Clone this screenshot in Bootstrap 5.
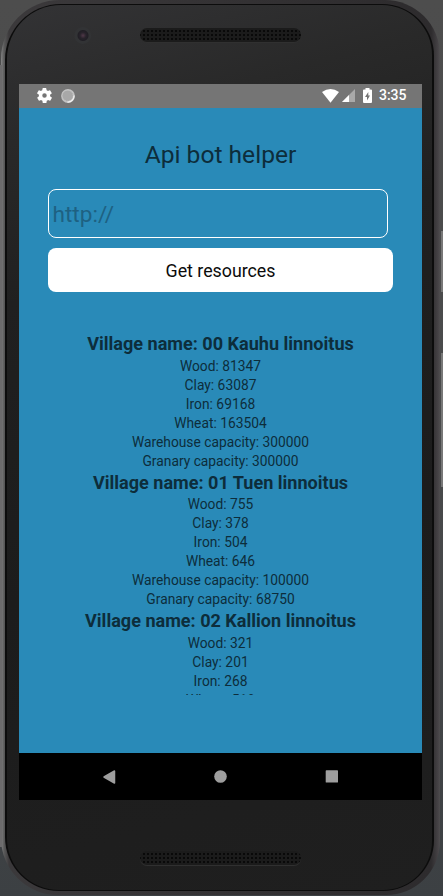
<!DOCTYPE html>
<html lang="en">
<head>
<meta charset="utf-8">
<meta name="viewport" content="width=device-width, initial-scale=1">
<title>Api bot helper</title>
<link href="https://cdn.jsdelivr.net/npm/bootstrap@5.3.0/dist/css/bootstrap.min.css" rel="stylesheet">
<style>
body{width:443px;height:896px;font-family:Roboto,sans-serif;background:linear-gradient(#4d4d4d,#494a4b 50%,#3c4043)}
.stage{width:443px;height:896px;padding:0 3px 1px 1px}
.side-key{right:0;width:2px;background:#777}
.edge{left:0;top:65px;width:2px;height:782px;background:#6c6b6c}
.shell{border-radius:59px 55px 54px 57px;padding:4px 6px 4px 4px;background:linear-gradient(90deg,#858585 0,#5a5a5a 3px,#3b393b 8px,#2d2b2d 430px,#454245 437px,#4f4d4f 100%)}
.rim{border-radius:56px 52px 51px 54px;padding:1px 2px;background:#0c0c0c}
.glass{border-radius:54px 50px 49px 52px;padding:79px 10px 0 12px;background:linear-gradient(165deg,#333335,#292929 14%,#202020 30%,#1c1c1c 60%,#1f1f1f)}
.lens{left:74px;top:27px;width:17px;height:17px;background:radial-gradient(circle at 9px 8.5px,#513949 0,#28232b 3px,#211f25 5px,#323335 6px,#323335 8px,transparent 9px)}
.grille{left:140px;width:161px;height:14px;background-color:#1b1b1b;background-image:radial-gradient(circle,#090909 .8px,transparent 1.3px);background-size:4px 4px;background-position:2px 1px;box-shadow:0 1px 0 #303030}
.grille-top{top:28px}
.grille-bottom{top:851px}
.screen{width:403px;height:716px;background:#298ab8;color:#0d2d3b}
.statusbar{height:23.5px;padding:0 15.5px 0 18px;background:#757575}
.clock{font-size:14px;line-height:27px;margin-left:7px;font-weight:500}
.app{padding:28px 29px 0}
.app-title{font-size:24.6px;line-height:37px;margin-bottom:16.5px}
.url-box{width:340px;height:49px;border:1px solid #fff;border-radius:8px;background:transparent;padding:2px 3.5px 0;font-size:22.6px;color:#0d2d3b;margin-bottom:10px}
.url-box::placeholder{color:#1e6182;opacity:1}
.fetch{width:345px;height:44px;border-radius:8px;font-size:17.8px;color:#0b0b0b;line-height:46px}
.villages{margin-top:40px;height:363px;font-size:13.8px;line-height:19px}
.village-name{font-size:18.07px;line-height:24.6px;font-weight:700}
.navkeys{height:47px;padding:0 83px 0 83px}
</style>
<script src="https://cdn.jsdelivr.net/npm/bootstrap@5.3.0/dist/js/bootstrap.bundle.min.js"></script>
</head>
<body class="m-0 overflow-hidden">
<div class="stage position-relative">
  <span class="edge position-absolute"></span>
  <span class="side-key position-absolute" style="top:231px;height:61px"></span>
  <span class="side-key position-absolute" style="top:353px;height:134px"></span>
  <div class="shell h-100"><div class="rim h-100"><div class="glass h-100">
    <main class="screen d-flex flex-column">
      <header class="statusbar d-flex align-items-center flex-shrink-0">
        <svg width="15" height="15" viewBox="2 2 20 20" fill="#fff"><path d="M19.400 13a7.500 7.500 0 0 0 0-2l2.100-1.600a.5.5 0 0 0 .1-.7l-2-3.400a.5.5 0 0 0-.6-.2l-2.500 1a7 7 0 0 0-1.700-1l-.4-2.600a.5.5 0 0 0-.5-.5h-4a.5.5 0 0 0-.5.5l-.4 2.600a7 7 0 0 0-1.700 1l-2.500-1a.5.5 0 0 0-.6.2l-2 3.400a.5.5 0 0 0 .1.7L4.600 11a7.500 7.500 0 0 0 0 2l-2.100 1.600a.5.5 0 0 0-.1.700l2 3.400c.1.200.4.300.6.200l2.500-1a7 7 0 0 0 1.700 1l.4 2.600c0 .3.200.5.5.5h4c.3 0 .5-.2.5-.5l.4-2.600a7 7 0 0 0 1.700-1l2.500 1c.2.100.5 0 .6-.2l2-3.400a.5.5 0 0 0-.1-.7zM12 15a3 3 0 1 1 0-6 3 3 0 0 1 0 6z"/></svg>
        <svg class="ms-2" width="16" height="16" viewBox="0 0 16 16"><circle cx="8" cy="8" r="6.900" fill="#c0c0c0"/><circle cx="7.700" cy="7.700" r="5.500" fill="#a8a8a8" stroke="#cfcfcf" stroke-width=".8" stroke-dasharray="1 1"/><path d="M14.100 7.500A6.300 6.300 0 0 1 7.500 14.100" fill="none" stroke="#f2f2f2" stroke-width="1.200"/></svg>
        <svg class="ms-auto" width="17" height="14" viewBox="0 0 17 14"><path d="M0 3Q8.500-3 17 3L8.500 13.800z" fill="#fff"/></svg>
        <svg style="margin-left:3px" width="13" height="13" viewBox="0 0 13 13"><path d="M0 13 13 0v13z" fill="#a9a9a9"/><path d="M0 13 7 6v7z" fill="#fff"/></svg>
        <svg style="margin-left:8px" width="9" height="15" viewBox="0 0 9 15"><path d="M2.500 0h4v1.500H8q1 0 1 1V14q0 1-1 1H1q-1 0-1-1V2.500q0-1 1-1h1.500z" fill="#fff"/><path d="M5.300 4 2 9h2v3.500L7 7.500H5.300z" fill="#757575"/></svg>
        <span class="clock text-white">3:35</span>
      </header>
      <section class="app flex-grow-1">
        <h1 class="app-title text-center fw-normal">Api bot helper</h1>
        <input class="url-box d-block" type="text" placeholder="http://" aria-label="Server address">
        <button class="fetch btn btn-light bg-white border-0 p-0 d-block" type="button">Get resources</button>
        <div class="villages overflow-hidden text-center">
          <div class="village-name">Village name: 00 Kauhu linnoitus</div>
          <div>Wood: 81347</div><div>Clay: 63087</div><div>Iron: 69168</div><div>Wheat: 163504</div><div>Warehouse capacity: 300000</div><div>Granary capacity: 300000</div>
          <div class="village-name">Village name: 01 Tuen linnoitus</div>
          <div>Wood: 755</div><div>Clay: 378</div><div>Iron: 504</div><div>Wheat: 646</div><div>Warehouse capacity: 100000</div><div>Granary capacity: 68750</div>
          <div class="village-name">Village name: 02 Kallion linnoitus</div>
          <div>Wood: 321</div><div>Clay: 201</div><div>Iron: 268</div><div>Wheat: 518</div>
        </div>
      </section>
      <footer class="navkeys bg-black d-flex align-items-center justify-content-between flex-shrink-0">
        <svg width="14" height="14" viewBox="0 0 14 14"><path d="M12.500 1v12L2 7z" fill="#9e9e9e" stroke="#9e9e9e" stroke-width="1.500" stroke-linejoin="round"/></svg>
        <svg width="14" height="14" viewBox="0 0 14 14"><circle cx="6.500" cy="6.500" r="6.300" fill="#9e9e9e"/></svg>
        <svg width="14" height="14" viewBox="0 0 14 14"><rect x=".7" y=".3" width="12.300" height="12.300" rx=".7" fill="#9e9e9e"/></svg>
      </footer>
    </main>
  </div></div></div>
  <span class="lens position-absolute rounded-circle"></span>
  <span class="grille grille-top position-absolute rounded-pill"></span>
  <span class="grille grille-bottom position-absolute rounded-pill"></span>
</div>
</body>
</html>
